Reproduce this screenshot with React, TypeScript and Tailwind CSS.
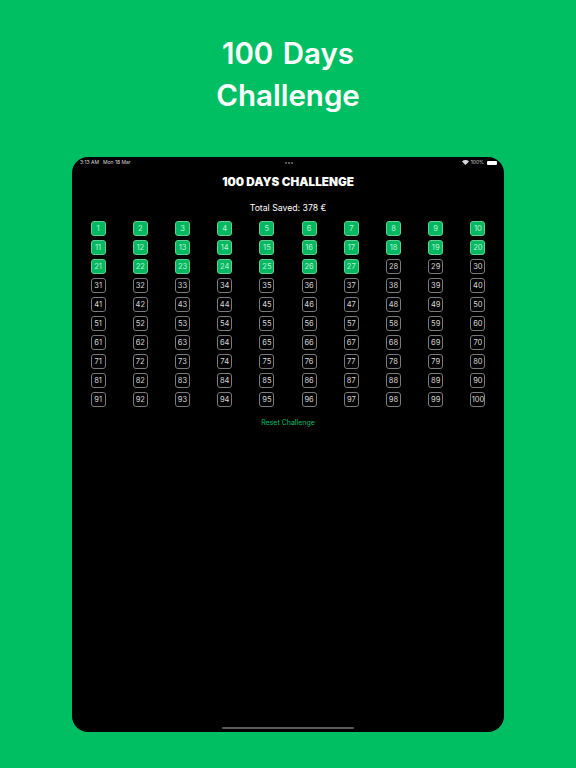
const days = Array.from({ length: 100 }, (_, i) => i + 1);

export default function App() {
  return (
    <main className="flex h-[768px] w-[576px] flex-col items-center overflow-hidden bg-[#00bf63] font-['Inter',sans-serif] antialiased">
      <h1 className="mt-[33px] h-[124px] text-center text-[29.5px] font-semibold leading-[41.5px] text-white [word-spacing:2px]">
        100 Days
        <br />
        Challenge
      </h1>

      <section className="relative flex h-[575px] w-[432px] flex-col items-center rounded-[16px] bg-black text-white">
        <div className="flex h-[10px] w-full items-center justify-between pl-[8px] pr-[7px] pt-px text-[5px] leading-none text-[#d8d8d8]">
          <div className="flex w-[80px] gap-[4px]">
            <span>3:13 AM</span>
            <span>Mon 18 Mar</span>
          </div>
          <div className="flex gap-[1px]">
            <span className="h-[2px] w-[2px] rounded-full bg-[#777]" />
            <span className="h-[2px] w-[2px] rounded-full bg-[#777]" />
            <span className="h-[2px] w-[2px] rounded-full bg-[#777]" />
          </div>
          <div className="flex w-[80px] items-center justify-end gap-[2px]">
            <svg width="7" height="5" viewBox="0 0 14 10" fill="#d8d8d8">
              <path d="M7 10 0 3a10 10 0 0 1 14 0z" />
            </svg>
            <span>100%</span>
            <span className="ml-px h-[4px] w-[10px] rounded-[1px] bg-white" />
          </div>
        </div>

        <h2 className="mt-[8px] text-[11.7px] font-black leading-[14px]">100 DAYS CHALLENGE</h2>
        <p className="mt-[13px] text-[8.7px] leading-[12px]">Total Saved: 378 €</p>

        <div className="mt-[7px] grid w-full grid-cols-10 justify-items-center gap-y-[4px] px-[5px]">
          {days.map((day) => (
            <div
              key={day}
              className={
                day <= 27
                  ? 'flex h-[15px] w-[15px] items-center justify-center rounded-[3px] border border-[#5fd08f] bg-[#00b85f] text-[7.5px] leading-none text-[#c4efd6]'
                  : 'flex h-[15px] w-[15px] items-center justify-center rounded-[3px] border border-[#7a7a7a] text-[7.5px] leading-none text-[#d8d8d8]'
              }
            >
              {day}
            </div>
          ))}
        </div>

        <button className="mt-[11px] text-[7px] leading-[10px] text-[#00bf63]">Reset Challenge</button>

        <span className="absolute bottom-[3px] left-1/2 h-[2px] w-[132px] -translate-x-1/2 rounded-full bg-[#5a5a5a]" />
      </section>
    </main>
  );
}
